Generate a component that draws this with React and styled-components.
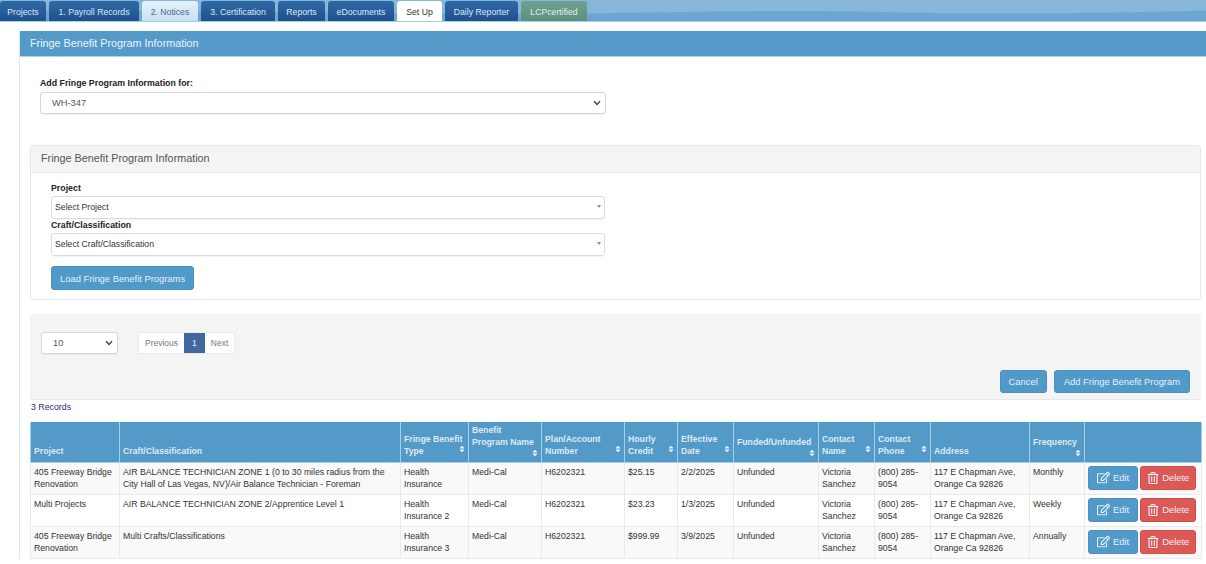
import React from 'react';
import styled, { createGlobalStyle } from 'styled-components';
import { FaRegEdit, FaRegTrashAlt, FaSort } from 'react-icons/fa';

const GlobalStyle = createGlobalStyle`
  html, body {
    margin: 0;
    padding: 0;
    background: #fff;
    font-family: "Liberation Sans", Arial, sans-serif;
    color: #333;
  }
`;

const Page = styled.div`
  width: 1206px;
  height: 564px;
  overflow: hidden;
`;

const TopBar = styled.div`
  position: relative;
  height: 22px;
  background: #6ba7d2;
  border-bottom: 1px solid #a5cde8;
  box-sizing: border-box;
  overflow: hidden;
`;

const Wave = styled.svg`
  position: absolute;
  left: 0;
  top: 0;
  width: 100%;
  height: 100%;
`;

const TabRow = styled.div`
  position: relative;
  display: flex;
  gap: 3px;
  height: 21px;
  padding-top: 1px;
  box-sizing: border-box;
`;

const tabSkins = {
  dark: 'background: linear-gradient(#2f6aa6, #1f4f8c); color: #dbe8f4;',
  light: 'background: linear-gradient(#e4f1fa, #c5e0f3); color: #47698c;',
  active: 'background: #fff; color: #333; height: 22px; font-weight: 500;',
  green: 'background: linear-gradient(#6fa08f, #5d8f7e); color: #e4f1ea;',
};

const Tab = styled.div`
  width: ${(p) => p.$w}px;
  height: 21px;
  display: flex;
  align-items: center;
  justify-content: center;
  font-size: 8.7px;
  border-radius: 3px 3px 0 0;
  ${(p) => tabSkins[p.$skin]}
`;

const Main = styled.div`
  margin: 9px 0 0 19px;
  border-left: 1px solid #d4edfa;
`;

const MainHeader = styled.div`
  height: 26px;
  background: #549ac9;
  border-bottom: 1px solid #a9d5ee;
  box-sizing: border-box;
  color: #eaf3f9;
  font-size: 10.8px;
  line-height: 25px;
  padding-left: 10px;
`;

const MainBody = styled.div`
  padding: 0 5px 0 10px;
`;

const TopForm = styled.div`
  padding: 20px 0 31px 10px;
`;

const Label = styled.div`
  font-size: 8.8px;
  font-weight: bold;
  color: #222;
  line-height: 12px;
`;

const chevron = "data:image/svg+xml,%3Csvg xmlns='http://www.w3.org/2000/svg' width='8' height='6' viewBox='0 0 8 6'%3E%3Cpath d='M1 1.2 4 4.4 7 1.2' fill='none' stroke='%23444' stroke-width='1.5'/%3E%3C/svg%3E";

const NativeSelect = styled.select`
  display: block;
  appearance: none;
  width: ${(p) => p.$w}px;
  height: ${(p) => p.$h}px;
  margin-top: ${(p) => p.$top || 0}px;
  padding: 0 11px;
  font-family: inherit;
  font-size: 9.3px;
  color: #555;
  background: #fff url("${chevron}") no-repeat right 4px center;
  border: 1px solid #d6d6d6;
  border-radius: 3px;
  box-shadow: 0 1px 1px rgba(0, 0, 0, 0.06);
`;

const Panel = styled.div`
  border: 1px solid #e6e6e6;
  border-radius: 3px;
  height: 155px;
  box-sizing: border-box;
`;

const PanelHeader = styled.div`
  height: 27px;
  background: #f4f4f4;
  border-bottom: 1px solid #e6e6e6;
  box-sizing: border-box;
  font-size: 10.8px;
  line-height: 25px;
  color: #555;
  padding-left: 10px;
`;

const PanelBody = styled.div`
  padding: 9px 20px 0;
`;

const Combo = styled.div`
  width: 554px;
  height: 23px;
  margin: 2px 0 0;
  display: flex;
  align-items: center;
  justify-content: space-between;
  box-sizing: border-box;
  padding: 0 3px 2px;
  font-size: 8.7px;
  color: #333;
  border: 1px solid #ddd;
  border-radius: 3px;
  box-shadow: 0 1px 1px rgba(0, 0, 0, 0.05);
`;

const Caret = styled.span`
  border-left: 2px solid transparent;
  border-right: 2px solid transparent;
  border-top: 3px solid #5b9fd0;
`;

const Button = styled.button`
  height: ${(p) => p.$h || 23}px;
  padding: 0 ${(p) => p.$px || 8}px;
  display: inline-flex;
  align-items: center;
  justify-content: center;
  gap: 3px;
  font-family: inherit;
  font-size: 9.4px;
  color: #e6f1f8;
  background: ${(p) => (p.$danger ? '#dc5a56' : '#5099c9')};
  border: 1px solid ${(p) => (p.$danger ? '#d54a45' : '#4a90c0')};
  border-radius: 3px;
`;

const LoadRow = styled.div`
  margin-top: 10px;
`;

const ToolPanel = styled.div`
  margin-top: 14px;
  height: 86px;
  box-sizing: border-box;
  background: #f4f4f4;
  border-bottom: 1px solid #e8e8e8;
  border-radius: 3px 3px 0 0;
  padding: 18px 11px 0;
  display: flex;
  flex-direction: column;
`;

const PagerRow = styled.div`
  display: flex;
  align-items: center;
  gap: 20px;
`;

const Pager = styled.div`
  display: flex;
  height: 20px;
  background: #fff;
  border: 1px solid #e8e8e8;
  border-radius: 2px;
`;

const PageItem = styled.span`
  display: flex;
  align-items: center;
  padding: 0 ${(p) => (p.$active ? 8 : 6)}px;
  font-size: 8.5px;
  color: ${(p) => (p.$active ? '#e8f0f7' : '#777')};
  background: ${(p) => (p.$active ? '#41689f' : 'transparent')};
`;

const ActionRow = styled.div`
  margin-top: 16px;
  display: flex;
  justify-content: flex-end;
  gap: 7px;
`;

const RecordCount = styled.div`
  height: 22px;
  box-sizing: border-box;
  font-size: 8.8px;
  line-height: 13px;
  color: #2a2a80;
  padding: 1px 0 0 1px;
`;

const Table = styled.table`
  width: 1171px;
  table-layout: fixed;
  border-collapse: collapse;
  font-size: 8.7px;
  line-height: 12.5px;
`;

const Th = styled.th`
  position: relative;
  height: 40px;
  padding: 0 3px ${(p) => (p.$low ? 13 : 4)}px 3px;
  box-sizing: border-box;
  vertical-align: bottom;
  text-align: left;
  font-weight: bold;
  color: #dceaf4;
  background: #549ac9;
  border: 1px solid #a9cfe8;
  border-top: 0;
`;

const SortMark = styled.span`
  position: absolute;
  right: 2px;
  bottom: ${(p) => (p.$low ? 3 : 7)}px;
  color: #e8f2f8;
  font-size: 8px;
  line-height: 8px;
`;

const Row = styled.tr`
  background: ${(p) => (p.$odd ? '#f9f9f9' : '#fff')};
`;

const Td = styled.td`
  height: 32px;
  padding: 3px 3px 0;
  box-sizing: border-box;
  vertical-align: top;
  color: #333;
  border: 1px solid #eaeaea;
`;

const ActionCell = styled(Td)`
  padding: 3px 0 0 3px;
  white-space: nowrap;
`;

const ActionGroup = styled.div`
  display: flex;
  gap: 2px;
`;

const columns = [
  { title: 'Project', width: 89 },
  { title: 'Craft/Classification', width: 281 },
  { title: 'Fringe Benefit Type', width: 68, sort: true },
  { title: 'Benefit Program Name', width: 73, sort: true, low: true },
  { title: 'Plan/Account Number', width: 83, sort: true },
  { title: 'Hourly Credit', width: 53, sort: true },
  { title: 'Effective Date', width: 56, sort: true },
  { title: 'Funded/Unfunded', width: 85, sort: true, low: true },
  { title: 'Contact Name', width: 56, sort: true },
  { title: 'Contact Phone', width: 56, sort: true },
  { title: 'Address', width: 99 },
  { title: 'Frequency', width: 55, sort: true, low: true },
  { title: '', width: 117 },
];

const rows = [
  {
    project: '405 Freeway Bridge Renovation',
    craft: 'AIR BALANCE TECHNICIAN ZONE 1 (0 to 30 miles radius from the City Hall of Las Vegas, NV)/Air Balance Technician - Foreman',
    type: 'Health Insurance',
    credit: '$25.15',
    date: '2/2/2025',
    frequency: 'Monthly',
  },
  {
    project: 'Multi Projects',
    craft: 'AIR BALANCE TECHNICIAN ZONE 2/Apprentice Level 1',
    type: 'Health Insurance 2',
    credit: '$23.23',
    date: '1/3/2025',
    frequency: 'Weekly',
  },
  {
    project: '405 Freeway Bridge Renovation',
    craft: 'Multi Crafts/Classifications',
    type: 'Health Insurance 3',
    credit: '$999.99',
    date: '3/9/2025',
    frequency: 'Annually',
  },
];

const tabs = [
  { label: 'Projects', w: 46, skin: 'dark' },
  { label: '1. Payroll Records', w: 90, skin: 'dark' },
  { label: '2. Notices', w: 56, skin: 'light' },
  { label: '3. Certification', w: 74, skin: 'dark' },
  { label: 'Reports', w: 47, skin: 'dark' },
  { label: 'eDocuments', w: 66, skin: 'dark' },
  { label: 'Set Up', w: 45, skin: 'active' },
  { label: 'Daily Reporter', w: 73, skin: 'dark' },
  { label: 'LCPcertified', w: 66, skin: 'green' },
];

const App = () => (
  <Page>
    <GlobalStyle />
    <TopBar>
      <Wave viewBox="0 0 1206 22" preserveAspectRatio="none">
        <path d="M0 0H1206V11C1100 14 1000 15 900 13C800 10 700 12 600 14C400 16 200 10 0 11Z" fill="#87b6da" />
      </Wave>
      <TabRow>
        {tabs.map((tab) => (
          <Tab key={tab.label} $w={tab.w} $skin={tab.skin}>{tab.label}</Tab>
        ))}
      </TabRow>
    </TopBar>
    <Main>
      <MainHeader>Fringe Benefit Program Information</MainHeader>
      <MainBody>
        <TopForm>
          <Label>Add Fringe Program Information for:</Label>
          <NativeSelect $w={566} $h={22} $top={3} defaultValue="WH-347">
            <option>WH-347</option>
          </NativeSelect>
        </TopForm>
        <Panel>
          <PanelHeader>Fringe Benefit Program Information</PanelHeader>
          <PanelBody>
            <Label>Project</Label>
            <Combo>Select Project<Caret /></Combo>
            <Label>Craft/Classification</Label>
            <Combo>Select Craft/Classification<Caret /></Combo>
            <LoadRow>
              <Button $h={24}>Load Fringe Benefit Programs</Button>
            </LoadRow>
          </PanelBody>
        </Panel>
        <ToolPanel>
          <PagerRow>
            <NativeSelect $w={77} $h={22} defaultValue="10">
              <option>10</option>
            </NativeSelect>
            <Pager>
              <PageItem>Previous</PageItem>
              <PageItem $active>1</PageItem>
              <PageItem>Next</PageItem>
            </Pager>
          </PagerRow>
          <ActionRow>
            <Button $px={8}>Cancel</Button>
            <Button $px={9}>Add Fringe Benefit Program</Button>
          </ActionRow>
        </ToolPanel>
        <RecordCount>3 Records</RecordCount>
        <Table>
          <colgroup>
            {columns.map((col) => (
              <col key={col.title} width={col.width} />
            ))}
          </colgroup>
          <thead>
            <tr>
              {columns.map((col) => (
                <Th key={col.title} $low={col.low}>
                  {col.title}
                  {col.sort && <SortMark $low={col.low}><FaSort /></SortMark>}
                </Th>
              ))}
            </tr>
          </thead>
          <tbody>
            {rows.map((row, i) => (
              <Row key={row.credit} $odd={i % 2 === 0}>
                <Td>{row.project}</Td>
                <Td>{row.craft}</Td>
                <Td>{row.type}</Td>
                <Td>Medi-Cal</Td>
                <Td>H6202321</Td>
                <Td>{row.credit}</Td>
                <Td>{row.date}</Td>
                <Td>Unfunded</Td>
                <Td>Victoria Sanchez</Td>
                <Td>(800) 285-9054</Td>
                <Td>117 E Chapman Ave, Orange Ca 92826</Td>
                <Td>{row.frequency}</Td>
                <ActionCell>
                  <ActionGroup>
                    <Button $h={24} $px={8}><FaRegEdit size={13} />Edit</Button>
                    <Button $h={24} $px={6} $danger><FaRegTrashAlt size={12} />Delete</Button>
                  </ActionGroup>
                </ActionCell>
              </Row>
            ))}
          </tbody>
        </Table>
      </MainBody>
    </Main>
  </Page>
);

export default App;
